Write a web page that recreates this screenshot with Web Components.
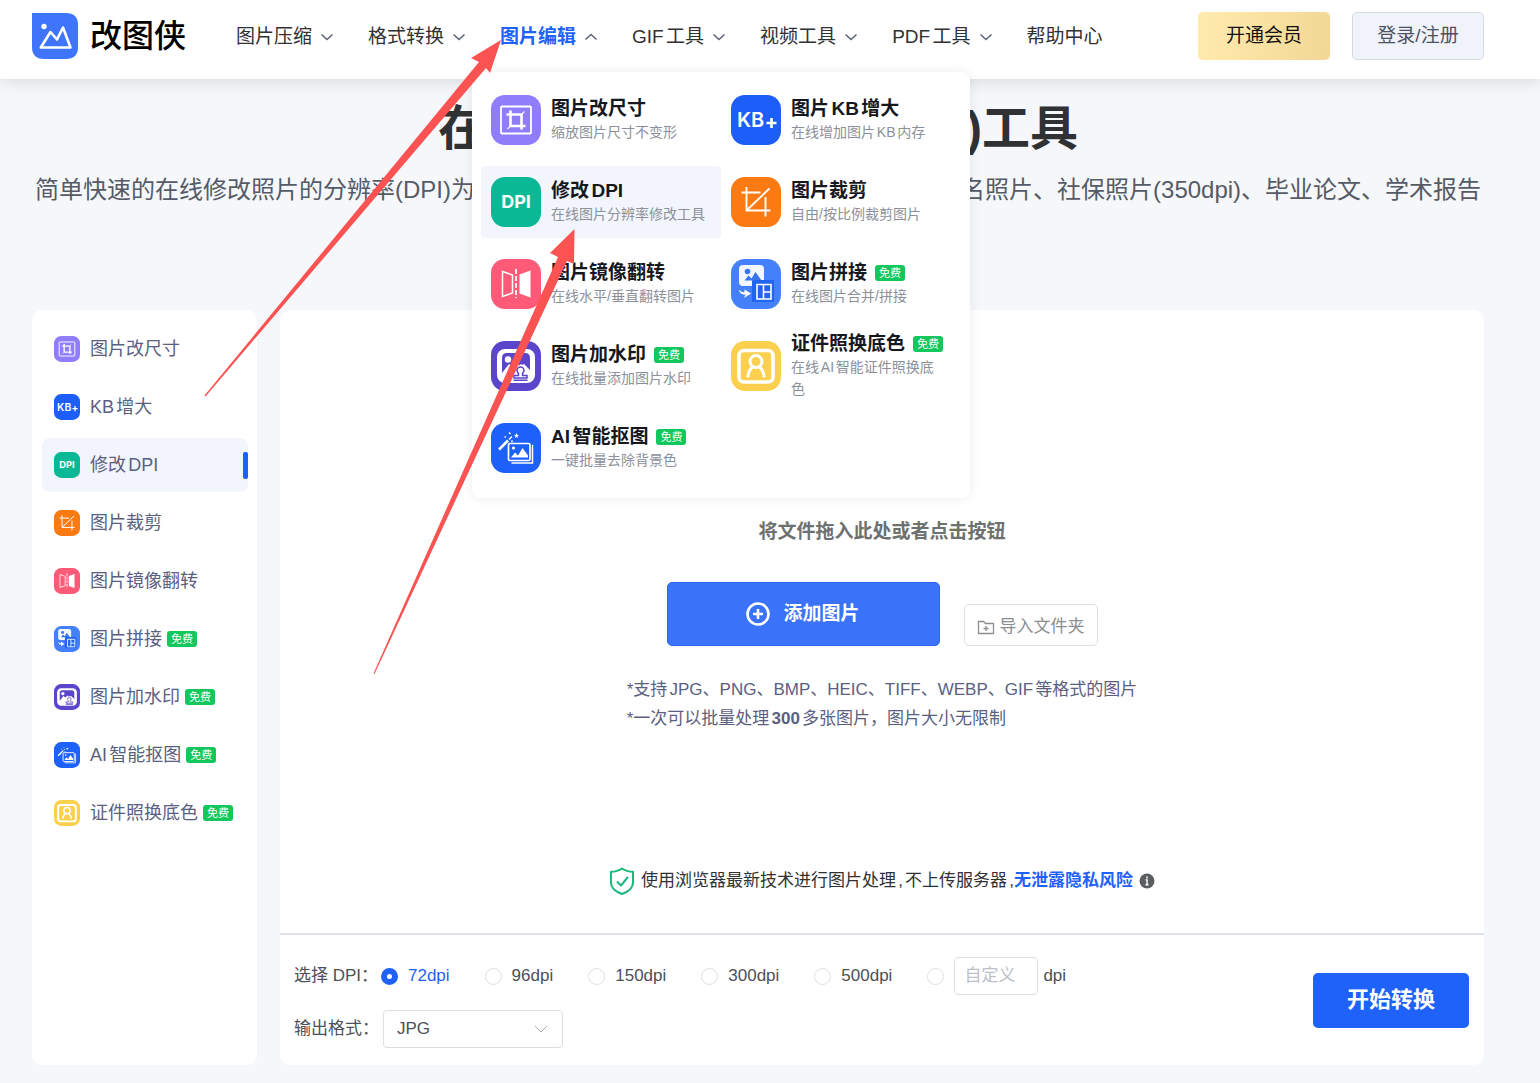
<!DOCTYPE html>
<html lang="zh-CN">
<head>
<meta charset="utf-8">
<title>改图侠</title>
<style>
  :root {
    --primary: #1f62f9;
    --text: #303133;
    --text-soft: #5a6080;
    --hover: #f3f5fc;
    --border: #dcdfe6;
    --free: #12c75c;
  }
  * { box-sizing: border-box; }
  body {
    margin: 0;
    background: #f5f7fb;
    color: var(--text);
    font-family: "Liberation Sans", "Noto Sans CJK SC", sans-serif;
    font-size: 17px;
    line-height: 24px;
    text-autospace: normal;
  }
</style>
</head>
<body>
<app-page></app-page>

<script>
(function() {
  const base = `
    *, *::before, *::after { box-sizing: border-box; }
    a { color: inherit; text-decoration: none; }
    button, input, select { font: inherit; color: inherit; margin: 0; }
    button { cursor: pointer; }
  `;

  const icons = {
    resize: {
      bg: "#8f7dfb",
      art: `<g fill="none" stroke="#fff">
        <rect x="10" y="11.500" width="30" height="27" rx="1" stroke-width="1.800"/>
        <path d="M19.500 15.500v15.500h15M15.500 19.500h15v15" stroke-width="2.600"/>
        <path d="M16.500 34l3-3M30.500 19.500l3-3" stroke-width="1.200"/>
      </g>`
    },
    kb: {
      bg: "#1d5df8",
      art: `<text x="6" y="32" font-size="20" font-weight="600" fill="#fff">KB</text>
        <path d="M35.500 28h10M40.500 23v10" stroke="#fff" stroke-width="2.600"/>`
    },
    dpi: {
      bg: "#0bb896",
      art: `<text x="25" y="31" font-size="18" font-weight="700" fill="#fff" text-anchor="middle">DPI</text>`
    },
    crop: {
      bg: "#fc7a12",
      art: `<path d="M15.500 10v23.500h24M10.500 15.500h19M34.500 20v19.500M15.500 33.500L38.500 11.500" fill="none" stroke="#fff" stroke-width="1.900"/>`
    },
    mirror: {
      bg: "#fd5a78",
      art: `<path d="M11.500 12.500l10 3.500v18l-10 3.500z" fill="none" stroke="#fff" stroke-width="1.500"/>
        <path d="M39.500 11.500l-11 4v19l11 4z" fill="#fff"/>
        <path d="M25 10v29" stroke="#fff" stroke-width="1.700" stroke-dasharray="5 2"/>`
    },
    stitch: {
      bg: "#4580fb",
      art: `<rect x="8" y="6" width="25" height="21" rx="4" fill="#f1f6ff"/>
        <circle cx="16.500" cy="12.500" r="2.800" fill="#3974ee"/>
        <path d="M13.500 21.500l4-5 3 3 4-6.500 6 8.500z" fill="#3974ee"/>
        <rect x="21" y="21" width="22" height="22" rx="1" fill="#2164ef"/>
        <path d="M26 25.500h14v14.500h-14zM32.500 25.500v14.500M32.500 33h7.500" fill="none" stroke="#fff" stroke-width="1.600"/>
        <path d="M8 30.500c1 5 4 5.500 6.500 5l-1.500 3.500 7-4.500-6.500-4v2.500c-2 .5-3.500 0-5.500-2.500z" fill="#fff"/>`
    },
    watermark: {
      bg: "#5a45cb",
      art: `<rect x="6" y="8" width="38" height="34" rx="8" fill="#fff"/>
        <path d="M11 32V17q0-5 5-5h18q5 0 5 5v12l-6-6-4 2-3-3-4 4-4-3z" fill="#5a45cb"/>
        <circle cx="17" cy="18.500" r="3.200" fill="#fff"/>
        <path d="M11 36l5-7 4 3 10-9 10 9v7H14z" fill="#fff"/>
        <path d="M27.500 34.500c.8-2.500-1.500-3-1.500-5a3.500 3.500 0 017 0c0 2-2.300 2.500-1.500 5h4.500v2.500h-13v-2.500zM22.500 39.300h14" fill="none" stroke="#5a45cb" stroke-width="1.500"/>`
    },
    cutout: {
      bg: "#1e60fa",
      art: `<g fill="none" stroke="#fff" stroke-width="1.700">
        <rect x="17.500" y="20.500" width="21.500" height="17" rx="1.500"/>
        <path d="M41 22.500h.5v17.500H20.500" stroke-width="1.500"/>
        <path d="M8 26.500l9-9" stroke-width="2.600"/>
        <path d="M18 16.500l3-3" stroke-width="1.500"/>
        </g>
        <path d="M20 34.500l4-5 3 3 4.500-7.500 5.500 7.500v2z" fill="#fff"/>
        <circle cx="22.500" cy="25" r="1.600" fill="#fff"/>
        <path d="M25.500 10l.7 1.800 1.900.1-1.500 1.200.5 1.900-1.600-1-1.600 1 .5-1.900-1.500-1.200 1.900-.1z" fill="#fff"/>
        <path d="M18 9.500l1.500 1.500M13.500 14h1.500M20.500 17.500l1 1.500" stroke="#fff" stroke-width="1.500"/>`
    },
    idphoto: {
      bg: "#fbd04e",
      art: `<g fill="none" stroke="#fff">
        <rect x="8" y="9.500" width="34" height="31.500" rx="5" stroke-width="3.600"/>
        <circle cx="25" cy="20.500" r="6" stroke-width="3"/>
        <path d="M17 36.500c0-5 1.500-8 4.500-10.500M33 36.500c0-5-1.500-8-4.500-10.500" stroke-width="3"/>
      </g>`
    }
  };

  const tools = [
    { icon: "resize", name: "图片改尺寸", desc: "缩放图片尺寸不变形" },
    { icon: "kb", name: "图片KB增大", side: "KB增大", desc: "在线增加图片KB内存" },
    { icon: "dpi", name: "修改DPI", desc: "在线图片分辨率修改工具", active: true },
    { icon: "crop", name: "图片裁剪", desc: "自由/按比例裁剪图片" },
    { icon: "mirror", name: "图片镜像翻转", desc: "在线水平/垂直翻转图片" },
    { icon: "stitch", name: "图片拼接", desc: "在线图片合并/拼接", free: true },
    { icon: "watermark", name: "图片加水印", desc: "在线批量添加图片水印", free: true },
    { icon: "idphoto", name: "证件照换底色", desc: "在线AI智能证件照换底色", free: true },
    { icon: "cutout", name: "AI智能抠图", desc: "一键批量去除背景色", free: true }
  ];

  // rounded square icon, its size comes from --size
  class ToolIcon extends HTMLElement {
    constructor() {
      super();
      this.attachShadow({ mode: "open" });
    }

    connectedCallback() {
      const icon = icons[this.getAttribute("name")];
      this.shadowRoot.innerHTML = `
        <style>
        :host{
          display: block;
          flex: none;
          width: var(--size, 50px);
          height: var(--size, 50px);
        }
        svg{
          display: block;
          width: 100%;
          height: 100%;
          font-family: Inter, "Open Sans", sans-serif;
        }
        </style>
        <svg viewBox="0 0 50 50" xmlns="http://www.w3.org/2000/svg" aria-hidden="true">
          <rect width="50" height="50" rx="14" fill="${icon.bg}"/>
          ${icon.art}
        </svg>
      `;
    }
  }
  customElements.define("tool-icon", ToolIcon);

  class FreeBadge extends HTMLElement {
    constructor() {
      super();
      this.attachShadow({ mode: "open" });
      this.shadowRoot.innerHTML = `
        <style>
        :host{
          display: inline-block;
          flex: none;
          padding: 0 4px;
          border-radius: 3px;
          background: var(--free);
          color: #fff;
          font-size: 11px;
          font-weight: 400;
          line-height: 16px;
        }
        </style>
        <slot></slot>
      `;
    }
  }
  customElements.define("free-badge", FreeBadge);

  class SiteLogo extends HTMLElement {
    constructor() {
      super();
      this.attachShadow({ mode: "open" });
      this.shadowRoot.innerHTML = `
        <style>
        ${base}
        :host{ display: block; flex: none; }
        a{
          display: flex;
          align-items: center;
          gap: 12px;
          color: #000;
          font-size: 32px;
          font-weight: 500;
          line-height: 46px;
        }
        svg{ width: 46px; height: 46px; }
        </style>
        <a href="#">
          <svg viewBox="0 0 46 46" xmlns="http://www.w3.org/2000/svg" aria-hidden="true">
            <path d="M0 0h34q12 0 12 12v22q0 12-12 12H12Q0 46 0 34z" fill="#3f75fd"/>
            <circle cx="12" cy="13.500" r="2.700" fill="#fff"/>
            <path d="M8.800 34.500L18.500 19l6.500 7.500 6-12 7.500 20z" fill="none" stroke="#fff" stroke-width="2.600" stroke-linejoin="round"/>
          </svg>
          <slot></slot>
        </a>
      `;
    }
  }
  customElements.define("site-logo", SiteLogo);

  // one entry of the top bar, the menu slot holds its drop-down panel
  class NavItem extends HTMLElement {
    constructor() {
      super();
      this.attachShadow({ mode: "open" });
    }

    connectedCallback() {
      this.shadowRoot.innerHTML = `
        <style>
        ${base}
        :host{ display: flex; position: relative; flex: none; }
        a{
          display: flex;
          align-items: center;
          gap: 8px;
          padding-bottom: 5px;
          font-size: 19px;
          white-space: nowrap;
        }
        svg{ width: 14px; height: 8px; }
        :host([open]) a{ color: var(--primary); font-weight: 700; }
        :host([open]) svg{ transform: rotate(180deg); }
        :host([plain]) svg{ display: none; }
        </style>
        <a href="#">
          <slot></slot>
          <svg viewBox="0 0 14 8" aria-hidden="true"><path d="M1.500 1.500L7 6.500l5.500-5" fill="none" stroke="#5a6275" stroke-width="1.500"/></svg>
        </a>
        <slot name="menu"></slot>
      `;
    }
  }
  customElements.define("nav-item", NavItem);

  class ToolCard extends HTMLElement {
    constructor() {
      super();
      this.attachShadow({ mode: "open" });
    }

    connectedCallback() {
      this.shadowRoot.innerHTML = `
        <style>
        ${base}
        :host{ display: block; }
        a{
          display: flex;
          align-items: center;
          gap: 10px;
          height: 72px;
          padding: 0 15px 0 10px;
          border-radius: 4px;
        }
        :host([active]) a, a:hover{ background: var(--hover); }
        .title{
          display: flex;
          align-items: center;
          gap: 8px;
          color: #16181d;
          font-size: 19px;
          font-weight: 700;
          white-space: nowrap;
        }
        .desc{
          color: #8c909a;
          font-size: 14px;
          line-height: 22px;
        }
        </style>
        <a href="#">
          <tool-icon name="${this.getAttribute("icon")}"></tool-icon>
          <div>
            <div class="title"><slot></slot></div>
            <div class="desc"><slot name="desc"></slot></div>
          </div>
        </a>
      `;
    }
  }
  customElements.define("tool-card", ToolCard);

  class ToolMenu extends HTMLElement {
    constructor() {
      super();
      this.attachShadow({ mode: "open" });
    }

    connectedCallback() {
      this.shadowRoot.innerHTML = `
        <style>
        :host{
          position: absolute;
          top: 72px;
          left: -28px;
          z-index: 2;
          display: grid;
          grid-template-columns: 240px 240px;
          row-gap: 10px;
          padding: 12px 9px 14px;
          border-radius: 8px;
          background: #fff;
          box-shadow: 0 0 12px rgba(0, 0, 0, 0.08);
        }
        </style>
        ${tools.map((t) => `
          <tool-card icon="${t.icon}" ${t.active ? "active" : ""}>
            ${t.name}${t.free ? "<free-badge>免费</free-badge>" : ""}
            <span slot="desc">${t.desc}</span>
          </tool-card>`).join("")}
      `;
    }
  }
  customElements.define("tool-menu", ToolMenu);

  class SiteHeader extends HTMLElement {
    constructor() {
      super();
      this.attachShadow({ mode: "open" });
    }

    connectedCallback() {
      this.shadowRoot.innerHTML = `
        <style>
        ${base}
        :host{
          position: relative;
          z-index: 1;
          display: flex;
          align-items: center;
          height: 79px;
          padding: 0 56px 0 32px;
          background: #fff;
          box-shadow: 0 2px 16px rgba(0, 0, 0, 0.13);
        }
        site-logo{ margin-bottom: 7px; }
        nav{
          display: flex;
          align-self: stretch;
          gap: 34px;
          margin-left: 50px;
        }
        .actions{
          display: flex;
          gap: 22px;
          margin: 0 0 7px auto;
        }
        button{
          width: 132px;
          height: 48px;
          padding: 0;
          border: 0;
          border-radius: 5px;
          font-size: 19px;
        }
        .vip{
          background: linear-gradient(100deg, #ffebae, #f2d795);
          color: #111;
        }
        .login{
          border: 1px solid #d5d9e2;
          background: #f0f3fa;
          color: #4b5260;
        }
        </style>
        <site-logo>改图侠</site-logo>
        <nav>
          <nav-item>图片压缩</nav-item>
          <nav-item>格式转换</nav-item>
          <nav-item open>图片编辑<tool-menu slot="menu"></tool-menu></nav-item>
          <nav-item>GIF工具</nav-item>
          <nav-item>视频工具</nav-item>
          <nav-item>PDF工具</nav-item>
          <nav-item plain>帮助中心</nav-item>
        </nav>
        <div class="actions">
          <button class="vip" type="button">开通会员</button>
          <button class="login" type="button">登录/注册</button>
        </div>
      `;
    }
  }
  customElements.define("site-header", SiteHeader);

  class PageIntro extends HTMLElement {
    constructor() {
      super();
      this.attachShadow({ mode: "open" });
      this.shadowRoot.innerHTML = `
        <style>
        :host{ display: block; padding-top: 22px; text-align: center; }
        h1{
          margin: 0 0 17px;
          font-size: 48px;
          line-height: 56px;
        }
        p{
          margin: 0;
          color: #555b66;
          font-size: 24px;
          line-height: 32px;
          white-space: nowrap;
        }
        </style>
        <h1><slot name="title"></slot></h1>
        <p><slot></slot></p>
      `;
    }
  }
  customElements.define("page-intro", PageIntro);

  class SideLink extends HTMLElement {
    constructor() {
      super();
      this.attachShadow({ mode: "open" });
    }

    connectedCallback() {
      this.shadowRoot.innerHTML = `
        <style>
        ${base}
        :host{ display: block; --size: 26px; }
        a{
          display: flex;
          align-items: center;
          height: 54px;
          padding-left: 12px;
          border-radius: 8px;
          color: var(--text-soft);
          font-size: 18px;
          white-space: nowrap;
        }
        tool-icon{ margin-right: 10px; }
        ::slotted(free-badge){ margin-left: 5px; }
        :host([active]) a{ background: var(--hover); }
        :host([active]) a::after{
          content: "";
          width: 5px;
          height: 27px;
          margin-left: auto;
          border-radius: 2px;
          background: var(--primary);
        }
        </style>
        <a href="#"><tool-icon name="${this.getAttribute("icon")}"></tool-icon><slot></slot></a>
      `;
    }
  }
  customElements.define("side-link", SideLink);

  class SideNav extends HTMLElement {
    constructor() {
      super();
      this.attachShadow({ mode: "open" });
    }

    connectedCallback() {
      // the sidebar lists background change after cutout
      const list = tools.filter((t) => t.icon !== "idphoto");
      list.push(tools.find((t) => t.icon === "idphoto"));
      this.shadowRoot.innerHTML = `
        <style>
        :host{ display: block; padding: 12px 9px 12px 10px; border-radius: 10px; background: #fff; }
        nav{ display: grid; gap: 4px; }
        </style>
        <nav>
          ${list.map((t) => `<side-link icon="${t.icon}" ${t.active ? "active" : ""}>${t.side || t.name}${t.free ? "<free-badge>免费</free-badge>" : ""}</side-link>`).join("")}
        </nav>
      `;
    }
  }
  customElements.define("side-nav", SideNav);

  class UploadPanel extends HTMLElement {
    constructor() {
      super();
      this.attachShadow({ mode: "open" });
      this.shadowRoot.innerHTML = `
        <style>
        ${base}
        :host{
          display: flex;
          flex: 1;
          flex-direction: column;
          align-items: center;
          padding: 208px 0 38px;
        }
        .hint{
          margin: 0 0 36px;
          color: #6d716f;
          font-size: 19px;
          font-weight: 700;
          line-height: 28px;
        }
        .buttons{ display: flex; align-items: flex-end; gap: 24px; }
        button{ display: flex; align-items: center; justify-content: center; }
        .add{
          gap: 13px;
          width: 273px;
          height: 64px;
          border: 1px solid #2e66ee;
          border-radius: 5px;
          background: #3b72fa;
          color: #fff;
          font-size: 19px;
          font-weight: 700;
        }
        .folder{
          gap: 5px;
          height: 42px;
          padding: 4px 12px 0;
          border: 1px solid var(--border);
          border-radius: 5px;
          background: #fff;
          color: #8b8d90;
        }
        .notes{
          margin: 29px 0 48px;
          color: var(--text-soft);
          line-height: 29px;
        }
        .privacy{
          display: flex;
          align-items: center;
          margin: auto 0 0;
          line-height: 28px;
        }
        .privacy a{ color: var(--primary); font-weight: 700; }
        .shield{ width: 26px; height: 28px; margin-right: 6px; }
        .info{ width: 16px; height: 16px; margin-left: 6px; }
        </style>
        <p class="hint">将文件拖入此处或者点击按钮</p>
        <div class="buttons">
          <button class="add" type="button">
            <svg width="24" height="24" viewBox="0 0 24 24" fill="none" stroke="#fff" stroke-width="2.600" aria-hidden="true"><circle cx="12" cy="12" r="10.500"/><path d="M12 7v10M7 12h10"/></svg>
            添加图片
          </button>
          <button class="folder" type="button">
            <svg width="18" height="15" viewBox="0 0 18 15" fill="none" stroke="#8b8d90" stroke-width="1.300" aria-hidden="true"><path d="M1.500 1.500h5l2 2h8v10h-15zM9 6v5M6.500 8.500h5"/></svg>
            导入文件夹
          </button>
        </div>
        <div class="notes">
          <div>*支持JPG、PNG、BMP、HEIC、TIFF、WEBP、GIF等格式的图片</div>
          <div>*一次可以批量处理<b>300</b>多张图片，图片大小无限制</div>
        </div>
        <p class="privacy">
          <svg class="shield" viewBox="0 0 26 28" fill="none" stroke="#1cb87b" stroke-width="2" stroke-linejoin="round" aria-hidden="true"><path d="M13 1.500c3 2.200 6.500 3.300 11 3.300v11c0 5.500-4.500 8.800-11 11.200C6.500 24.600 2 21.300 2 15.800v-11C6.500 4.800 10 3.700 13 1.500z"/><path d="M8 14.500l4 4 7-8.500"/></svg>
          <span>使用浏览器最新技术进行图片处理,不上传服务器,</span><a href="#">无泄露隐私风险</a>
          <svg class="info" viewBox="0 0 16 16" aria-hidden="true"><circle cx="8" cy="8" r="7.500" fill="#5c5e62"/><path d="M8 3.500v2M6.500 7H8v4.500M6.500 11.800h3" stroke="#fff" stroke-width="1.500"/></svg>
        </p>
      `;
    }
  }
  customElements.define("upload-panel", UploadPanel);

  class OptionBar extends HTMLElement {
    constructor() {
      super();
      this.attachShadow({ mode: "open" });
    }

    connectedCallback() {
      const values = ["72dpi", "96dpi", "150dpi", "300dpi", "500dpi"];
      this.shadowRoot.innerHTML = `
        <style>
        ${base}
        :host{ display: block; border-top: 2px solid #dfe2e8; }
        form{
          display: flex;
          align-items: center;
          justify-content: space-between;
          padding: 22px 15px 17px 14px;
        }
        .rows{ display: grid; gap: 15px; color: #4d5058; }
        .row{ display: flex; align-items: center; height: 38px; }
        .name{ width: 87px; white-space: nowrap; }
        .row > label:not(.name){ display: flex; align-items: center; gap: 10px; margin-right: 35px; }
        .row > label:has(:checked){ color: var(--primary); }
        input[type=radio]{
          appearance: none;
          width: 17px;
          height: 17px;
          border: 1px solid var(--border);
          border-radius: 50%;
          background: #fff;
        }
        input[type=radio]:checked{ border: 6px solid var(--primary); }
        .custom{
          width: 84px;
          height: 38px;
          margin: 0 5px 0 10px;
          padding: 0 9px;
          border: 1px solid var(--border);
          border-radius: 4px;
        }
        .custom::placeholder{ color: #bcbfc7; }
        .select{ display: grid; align-items: center; margin-left: 2px; }
        .select > *{ grid-area: 1 / 1; }
        select{
          appearance: none;
          width: 180px;
          height: 38px;
          padding: 0 13px;
          border: 1px solid var(--border);
          border-radius: 4px;
          background: #fff;
        }
        .select svg{ justify-self: end; margin-right: 15px; pointer-events: none; }
        .start{
          width: 156px;
          height: 55px;
          margin-bottom: 5px;
          padding: 0;
          border: 0;
          border-radius: 5px;
          background: var(--primary);
          color: #fff;
          font-size: 22px;
          font-weight: 700;
        }
        </style>
        <form>
          <div class="rows">
            <div class="row">
              <span class="name">选择 DPI：</span>
              ${values.map((v, i) => `<label><input type="radio" name="dpi" ${i ? "" : "checked"}>${v}</label>`).join("")}
              <input type="radio" name="dpi" aria-label="自定义">
              <input class="custom" id="custom" type="text" placeholder="自定义">
              <label for="custom">dpi</label>
            </div>
            <div class="row">
              <label class="name" for="format">输出格式：</label>
              <div class="select">
                <select id="format"><option>JPG</option></select>
                <svg width="14" height="8" viewBox="0 0 14 8" aria-hidden="true"><path d="M1 1l6 6 6-6" fill="none" stroke="#a8abb2"/></svg>
              </div>
            </div>
          </div>
          <button class="start" type="button">开始转换</button>
        </form>
      `;
    }
  }
  customElements.define("option-bar", OptionBar);

  // red pointers drawn over the page
  class GuideArrows extends HTMLElement {
    constructor() {
      super();
      this.attachShadow({ mode: "open" });
      this.shadowRoot.innerHTML = `
        <style>
        :host{ position: absolute; top: 0; left: 0; z-index: 5; pointer-events: none; }
        svg{ display: block; }
        </style>
        <svg width="620" height="700" viewBox="0 0 620 700" fill="#fb5252" aria-hidden="true">
          <path d="M501 40L471 58l8 4L204.500 395.500l1 1L486 68l4 5z"/>
          <path d="M574.500 229L550 253l8 4L373.500 673.500l1 .5L567 261l7 3z"/>
        </svg>
      `;
    }
  }
  customElements.define("guide-arrows", GuideArrows);

  class AppPage extends HTMLElement {
    constructor() {
      super();
      this.attachShadow({ mode: "open" });
    }

    connectedCallback() {
      this.shadowRoot.innerHTML = `
        <style>
        ${base}
        :host{
          position: relative;
          display: flex;
          flex-direction: column;
          min-height: 100vh;
          overflow-x: clip;
        }
        main{
          display: flex;
          flex: 1;
          flex-direction: column;
          padding: 0 56px 18px 32px;
        }
        .content{
          display: grid;
          flex: 1;
          grid-template-columns: 225px 1fr;
          gap: 23px;
          margin-top: 104px;
        }
        .work{
          display: flex;
          flex-direction: column;
          border-radius: 10px;
          background: #fff;
        }
        </style>
        <site-header></site-header>
        <main>
          <page-intro>
            <span slot="title">在线修改图片分辨率(DPI)工具</span>
            简单快速的在线修改照片的分辨率(DPI)为300dpi、350dpi等，适用于各类公务员考试报名照片、社保照片(350dpi)、毕业论文、学术报告
          </page-intro>
          <div class="content">
            <side-nav></side-nav>
            <section class="work">
              <upload-panel></upload-panel>
              <option-bar></option-bar>
            </section>
          </div>
        </main>
        <guide-arrows></guide-arrows>
      `;
    }
  }
  customElements.define("app-page", AppPage);
})();
</script>
</body>
</html>
